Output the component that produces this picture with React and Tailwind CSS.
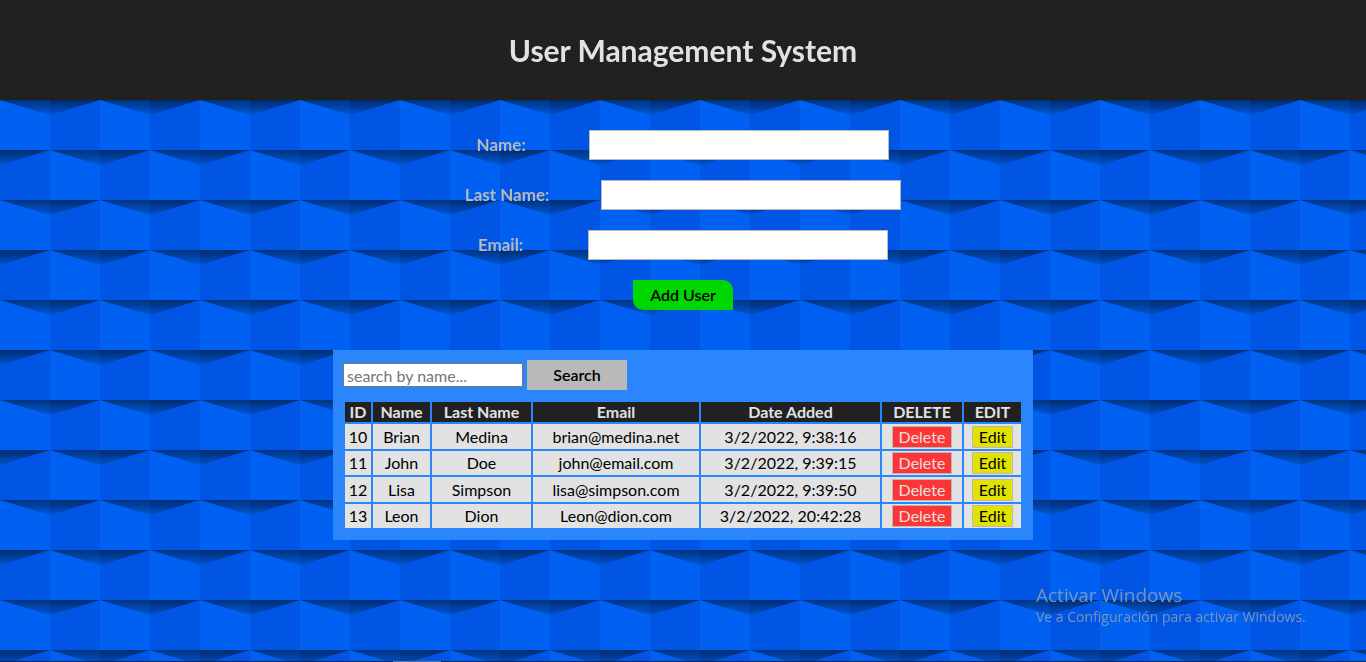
const users = [
  { id: 10, name: "Brian", last: "Medina", email: "brian@medina.net", date: "3/2/2022, 9:38:16" },
  { id: 11, name: "John", last: "Doe", email: "john@email.com", date: "3/2/2022, 9:39:15" },
  { id: 12, name: "Lisa", last: "Simpson", email: "lisa@simpson.com", date: "3/2/2022, 9:39:50" },
  { id: 13, name: "Leon", last: "Dion", email: "Leon@dion.com", date: "3/2/2022, 20:42:28" },
];

const columns = [
  { title: "ID", width: "w-[26px]" },
  { title: "Name", width: "w-[57px]" },
  { title: "Last Name", width: "w-[99px]" },
  { title: "Email", width: "w-[166px]" },
  { title: "Date Added", width: "w-[179px]" },
  { title: "DELETE", width: "w-[80px]" },
  { title: "EDIT", width: "w-[57px]" },
];

function Backdrop() {
  return (
    <svg className="fixed inset-0 -z-10 h-full w-full" aria-hidden="true">
      <defs>
        <linearGradient id="shadeLight" x1="0" y1="0" x2="0" y2="15" gradientUnits="userSpaceOnUse">
          <stop offset="0" stopColor="#003580" />
          <stop offset="1" stopColor="#0056d8" />
        </linearGradient>
        <linearGradient id="shadeDark" x1="0" y1="0" x2="0" y2="15" gradientUnits="userSpaceOnUse">
          <stop offset="0" stopColor="#002d70" />
          <stop offset="1" stopColor="#004fcb" />
        </linearGradient>
        <pattern id="tiles" width="100" height="100" patternUnits="userSpaceOnUse">
          <rect width="100" height="100" fill="#0055e5" />
          <rect width="50" height="50" fill="#0060f2" />
          <rect x="50" y="50" width="50" height="50" fill="#0060f2" />
          <path d="M0 0H50V15Z" fill="url(#shadeLight)" />
          <path d="M50 0H100L50 15Z" fill="url(#shadeDark)" />
          <g transform="translate(0 50)">
            <path d="M50 0H100V15Z" fill="url(#shadeLight)" />
            <path d="M0 0H50L0 15Z" fill="url(#shadeDark)" />
          </g>
        </pattern>
      </defs>
      <rect width="100%" height="100%" fill="url(#tiles)" />
    </svg>
  );
}

function Field({ id, label, type = "text" }) {
  return (
    <div className="flex h-[30px] w-full items-center justify-evenly">
      <label htmlFor={id} className="text-[17px] leading-5 font-bold text-[#b9b9b9]">{label}</label>
      <input id={id} type={type} className="h-[30px] w-[300px] border border-[#b9b9b9] bg-white px-1 outline-none" />
    </div>
  );
}

export default function App() {
  return (
    <div className="relative isolate flex min-h-screen flex-col items-center overflow-hidden font-['Lato',sans-serif] text-[16px] leading-5 text-black">
      <Backdrop />
      <header className="flex h-[100px] w-full items-center justify-center bg-[#212121]">
        <h1 className="text-[30px] leading-9 font-bold text-[#e2e2e2]">User Management System</h1>
      </header>

      <form className="mt-[30px] flex w-full max-w-[540px] flex-col items-center gap-5" onSubmit={(e) => e.preventDefault()}>
        <Field id="name" label="Name:" />
        <Field id="last-name" label="Last Name:" />
        <Field id="email" label="Email:" type="email" />
        <button type="submit" className="h-[30px] w-[100px] rounded-tr-[10px] rounded-bl-[10px] bg-[#00d600] font-semibold">
          Add User
        </button>
      </form>

      <main className="mt-10 w-full max-w-[700px] bg-[#2b85fb] p-2.5">
        <form className="mb-2.5 flex items-center gap-1" onSubmit={(e) => e.preventDefault()}>
          <input
            type="text"
            aria-label="search by name"
            placeholder="search by name..."
            className="h-6 w-[180px] border border-[#767676] bg-white px-[3px] leading-5 outline-none placeholder:text-[#757575]"
          />
          <button type="submit" className="h-[30px] w-[100px] bg-[#b9b9b9] font-semibold">Search</button>
        </form>
        <table className="w-full table-fixed border-separate border-spacing-[2px] text-center">
          <thead>
            <tr>
              {columns.map((c) => (
                <th key={c.title} className={`${c.width} bg-[#212121] p-0 font-bold text-[#e2e2e2]`}>{c.title}</th>
              ))}
            </tr>
          </thead>
          <tbody className="[&_td]:bg-[#e2e2e2] [&_td]:p-px">
            {users.map((u) => (
              <tr key={u.id} className="odd:h-[25px] even:h-6">
                <td>{u.id}</td>
                <td>{u.name}</td>
                <td>{u.last}</td>
                <td>{u.email}</td>
                <td>{u.date}</td>
                <td>
                  <button type="button" className="mx-auto block h-[22px] border border-[#b9b9b9] bg-[#ff3434] px-1.5 text-[#e2e2e2]">Delete</button>
                </td>
                <td>
                  <button type="button" className="mx-auto block h-[22px] border border-[#b9b9b9] bg-[#e2e200] px-1.5">Edit</button>
                </td>
              </tr>
            ))}
          </tbody>
        </table>
      </main>

      <aside className="absolute right-[54px] bottom-[35px] w-[276px] font-['Open_Sans',sans-serif] whitespace-nowrap text-[#8a9bb5]/90">
        <p className="text-[19px] leading-6">Activar Windows</p>
        <p className="text-[14px] leading-5">Ve a Configuración para activar Windows.</p>
      </aside>

      <div className="absolute inset-x-0 bottom-0 flex h-px bg-[#0b2550]">
        <span className="ml-[393px] w-12 bg-[#5d7596]" />
      </div>
    </div>
  );
}
